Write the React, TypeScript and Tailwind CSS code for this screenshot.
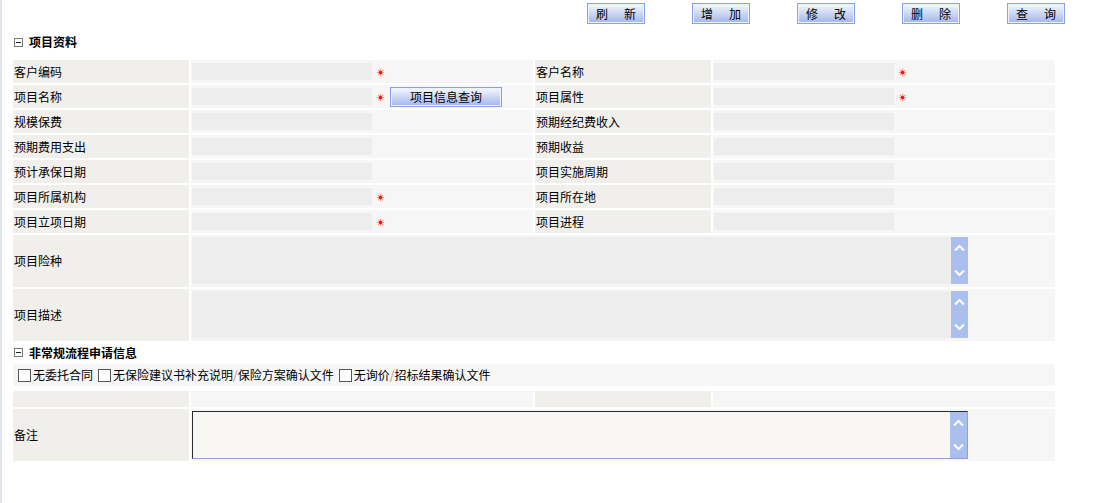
import React from 'react';

const Star = () => (
  <svg width="9" height="9" viewBox="0 0 9 9" className="shrink-0 mt-[2px]">
    <path d="M4.5 0.8v7.4M0.8 4.5h7.4M1.9 1.9l5.2 5.2M7.1 1.9l-5.2 5.2" stroke="#fb9a86" strokeWidth="1.2" />
    <circle cx="4.5" cy="4.5" r="1.7" fill="#e4141c" />
  </svg>
);

const MinusBox = () => (
  <svg width="9" height="9" viewBox="0 0 9 9" className="shrink-0">
    <rect x="0.5" y="0.5" width="8" height="8" fill="#fff" stroke="#7a7a7a" />
    <path d="M2 4.5h5" stroke="#222" strokeWidth="1" />
  </svg>
);

const ScrollBar = () => (
  <div className="w-[17px] h-full bg-[#aabfee] flex flex-col items-center justify-between py-[7px] shrink-0">
    <svg width="11" height="8" viewBox="0 0 11 8">
      <path d="M1 6.5 5.5 2 10 6.5" stroke="#fff" strokeWidth="2" fill="none" />
    </svg>
    <svg width="11" height="8" viewBox="0 0 11 8">
      <path d="M1 1.5 5.5 6 10 1.5" stroke="#fff" strokeWidth="2" fill="none" />
    </svg>
  </div>
);

const Label: React.FC<{ children?: React.ReactNode; className?: string }> = ({ children, className = '' }) => (
  <div className={`bg-[#f0efeb] flex items-center pl-[1px] text-black ${className}`}>{children}</div>
);

const Input = () => <div className="ml-[1px] w-[180px] h-[17px] bg-[#ededed] shrink-0" />;

const Value: React.FC<{ star?: boolean; children?: React.ReactNode }> = ({ star, children }) => (
  <div className="bg-[#f6f6f6] flex items-center">
    <Input />
    {star && <span className="ml-[4px] flex"><Star /></span>}
    {children}
  </div>
);

const TopButton: React.FC<{ a: string; b: string }> = ({ a, b }) => (
  <button className="w-[58px] h-[21px] border border-[#86a2e4] bg-gradient-to-b from-[#f6f8fe] to-[#a3b6ea] flex items-center justify-center gap-[16px] text-[12px] text-black leading-none shadow-[inset_0_0_0_1px_#eef2fc]">
    <span>{a}</span>
    <span>{b}</span>
  </button>
);

const Check: React.FC<{ children: React.ReactNode }> = ({ children }) => (
  <span className="flex items-center gap-[2px]">
    <span className="w-[13px] h-[13px] border border-[#555] bg-white" />
    <span>{children}</span>
  </span>
);

const Slash = () => <span className="text-[#d0806a]">/</span>;

const rows: [string, boolean, string, boolean][] = [
  ['客户编码', true, '客户名称', true],
  ['项目名称', true, '项目属性', true],
  ['规模保费', false, '预期经纪费收入', false],
  ['预期费用支出', false, '预期收益', false],
  ['预计承保日期', false, '项目实施周期', false],
  ['项目所属机构', true, '项目所在地', false],
  ['项目立项日期', true, '项目进程', false],
];

export default function App() {
  return (
    <div className="min-h-[503px] bg-white border-l-2 border-[#dfe5ee] text-[12px] text-black font-['Noto_Sans_CJK_SC','Noto_Sans',sans-serif] leading-none">
      {/* toolbar */}
      <div className="h-[24px] pt-[3px] flex justify-end gap-[47px] pr-[38px]">
        <TopButton a="刷" b="新" />
        <TopButton a="增" b="加" />
        <TopButton a="修" b="改" />
        <TopButton a="删" b="除" />
        <TopButton a="查" b="询" />
      </div>

      {/* section 1 */}
      <div className="h-[36px] flex items-center gap-[6px] pl-[12px]">
        <MinusBox />
        <span className="font-bold">项目资料</span>
      </div>

      <div className="ml-[11px] w-[1042px] grid grid-cols-[176px_342px_176px_342px] gap-[2px]">
        {rows.map(([l1, s1, l2, s2], i) => (
          <React.Fragment key={l1}>
            <Label className="h-[23px]">{l1}</Label>
            <Value star={s1}>
              {i === 1 && (
                <button className="ml-[5px] w-[112px] h-[20px] border border-[#86a2e4] bg-gradient-to-b from-[#f6f8fe] to-[#a3b6ea] text-[12px] text-black leading-none shadow-[inset_0_0_0_1px_#eef2fc]">
                  项目信息查询
                </button>
              )}
            </Value>
            <Label className="h-[23px]">{l2}</Label>
            <Value star={s2} />
          </React.Fragment>
        ))}

        {['项目险种', '项目描述'].map((l) => (
          <React.Fragment key={l}>
            <Label className="h-[52px]">{l}</Label>
            <div className="col-span-3 bg-[#f6f6f6] pt-[2px]">
              <div className="ml-[1px] w-[776px] h-[47px] flex">
                <div className="flex-1 bg-[#ededed]" />
                <ScrollBar />
              </div>
            </div>
          </React.Fragment>
        ))}
      </div>

      {/* section 2 */}
      <div className="h-[23px] flex items-center gap-[6px] pl-[12px]">
        <MinusBox />
        <span className="font-bold">非常规流程申请信息</span>
      </div>

      <div className="ml-[11px] w-[1042px] h-[22px] bg-[#f6f6f6] flex items-center gap-[5px] pl-[5px]">
        <Check>无委托合同</Check>
        <Check>
          无保险建议书补充说明<Slash />保险方案确认文件
        </Check>
        <Check>
          无询价<Slash />招标结果确认文件
        </Check>
      </div>

      <div className="ml-[11px] mt-[5px] w-[1042px] grid grid-cols-[176px_342px_176px_342px] gap-[2px]">
        <Label className="h-[16px]" />
        <div className="bg-[#f6f6f6]" />
        <Label className="h-[16px]" />
        <div className="bg-[#f6f6f6]" />

        <Label className="h-[52px]">备注</Label>
        <div className="col-span-3 bg-[#f6f6f6] pt-[2px]">
          <div className="ml-[1px] w-[776px] h-[48px] flex border-t border-l border-t-[#2a2a33] border-l-[#2a2a33] border-r border-b border-r-[#9a9ad6] border-b-[#9a9ad6]">
            <div className="flex-1 bg-[#f8f7f3]" />
            <ScrollBar />
          </div>
        </div>
      </div>
    </div>
  );
}
